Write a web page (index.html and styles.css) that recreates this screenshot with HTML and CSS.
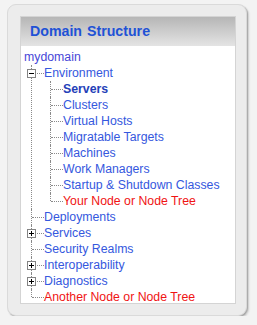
FILE: index.html
```html
<!DOCTYPE html>
<html>
<head>
<meta charset="utf-8">
<link rel="stylesheet" href="styles.css">
</head>
<body>
<div class="frame">
  <div class="panel">
    <div class="header">Domain Structure</div>
    <div class="tree">
      <div class="root">mydomain</div>
      <ul class="level">
        <li>
          <div class="row"><span class="exp minus"></span><span class="conn"></span><span class="lnk">Environment</span></div>
          <ul class="level sub">
            <li><div class="row"><span class="conn"></span><span class="lnk bold">Servers</span></div></li>
            <li><div class="row"><span class="conn"></span><span class="lnk">Clusters</span></div></li>
            <li><div class="row"><span class="conn"></span><span class="lnk">Virtual Hosts</span></div></li>
            <li><div class="row"><span class="conn"></span><span class="lnk">Migratable Targets</span></div></li>
            <li><div class="row"><span class="conn"></span><span class="lnk">Machines</span></div></li>
            <li><div class="row"><span class="conn"></span><span class="lnk">Work Managers</span></div></li>
            <li><div class="row"><span class="conn"></span><span class="lnk">Startup &amp; Shutdown Classes</span></div></li>
            <li><div class="row"><span class="conn"></span><span class="lnk red">Your Node or Node Tree</span></div></li>
          </ul>
        </li>
        <li><div class="row"><span class="conn"></span><span class="lnk">Deployments</span></div></li>
        <li><div class="row"><span class="exp plus"></span><span class="conn"></span><span class="lnk">Services</span></div></li>
        <li><div class="row"><span class="conn"></span><span class="lnk">Security Realms</span></div></li>
        <li><div class="row"><span class="exp plus"></span><span class="conn"></span><span class="lnk">Interoperability</span></div></li>
        <li><div class="row"><span class="exp plus"></span><span class="conn"></span><span class="lnk">Diagnostics</span></div></li>
        <li><div class="row"><span class="conn"></span><span class="lnk red">Another Node or Node Tree</span></div></li>
      </ul>
    </div>
  </div>
</div>
</body>
</html>
```
FILE: styles.css
```css
html, body {
  margin: 0;
  padding: 0;
  background: #f3f3f3;
}
body {
  font-family: "Liberation Sans", Arial, sans-serif;
  font-size: 12.3px;
}
.frame {
  margin: 4px 0 0 7px;
  width: 214px;
  height: 288px;
  padding: 11px 12px 11px 12px;
  background: #ececec;
  border: 1px solid #dadada;
  border-radius: 9px;
  box-shadow: 1px 1px 1px #a8a8a8, 2px 2px 2px #d0d0d0;
}
.panel {
  width: 214px;
  height: 286px;
  background: #fff;
  border: 1px solid #d4d4d4;
}
.header {
  height: 29px;
  line-height: 28px;
  padding-left: 9px;
  background: linear-gradient(#b6b6b6, #e4e4e4);
  color: #1f52d6;
  font-weight: bold;
  font-size: 14.2px;
  word-spacing: 1px;
}
.tree {
  padding-top: 3px;
}
.root {
  height: 16px;
  line-height: 16px;
  padding-left: 3px;
  color: #4747d8;
}
ul.level {
  list-style: none;
  margin: 0 0 0 10px;
  padding: 0;
}
ul.level.sub {
  margin-left: 18px;
}
ul.level > li {
  border-left: 1px dotted #8a8a8a;
  position: relative;
}
ul.level > li:last-child {
  border-left: 1px solid transparent;
}
ul.level > li:last-child::before {
  content: "";
  position: absolute;
  left: -1px;
  top: 0;
  height: 8px;
  border-left: 1px dotted #8a8a8a;
}
.row {
  height: 16px;
  display: flex;
  align-items: center;
  position: relative;
}
.conn {
  width: 12px;
  height: 0;
  border-top: 1px dotted #8a8a8a;
  margin-top: 1px;
}
.lnk {
  color: #3558de;
  white-space: nowrap;
  line-height: 16px;
}
.lnk.bold {
  font-weight: bold;
  color: #2440b8;
}
.lnk.red {
  color: #f01414;
}
.exp {
  position: absolute;
  left: -5px;
  top: 4px;
  width: 7px;
  height: 7px;
  border: 1px solid #848484;
  background: #fff;
  z-index: 1;
}
.exp::before {
  content: "";
  position: absolute;
  left: 1px;
  top: 3px;
  width: 5px;
  height: 1px;
  background: #000;
}
.exp.plus::after {
  content: "";
  position: absolute;
  left: 3px;
  top: 1px;
  width: 1px;
  height: 5px;
  background: #000;
}
```
